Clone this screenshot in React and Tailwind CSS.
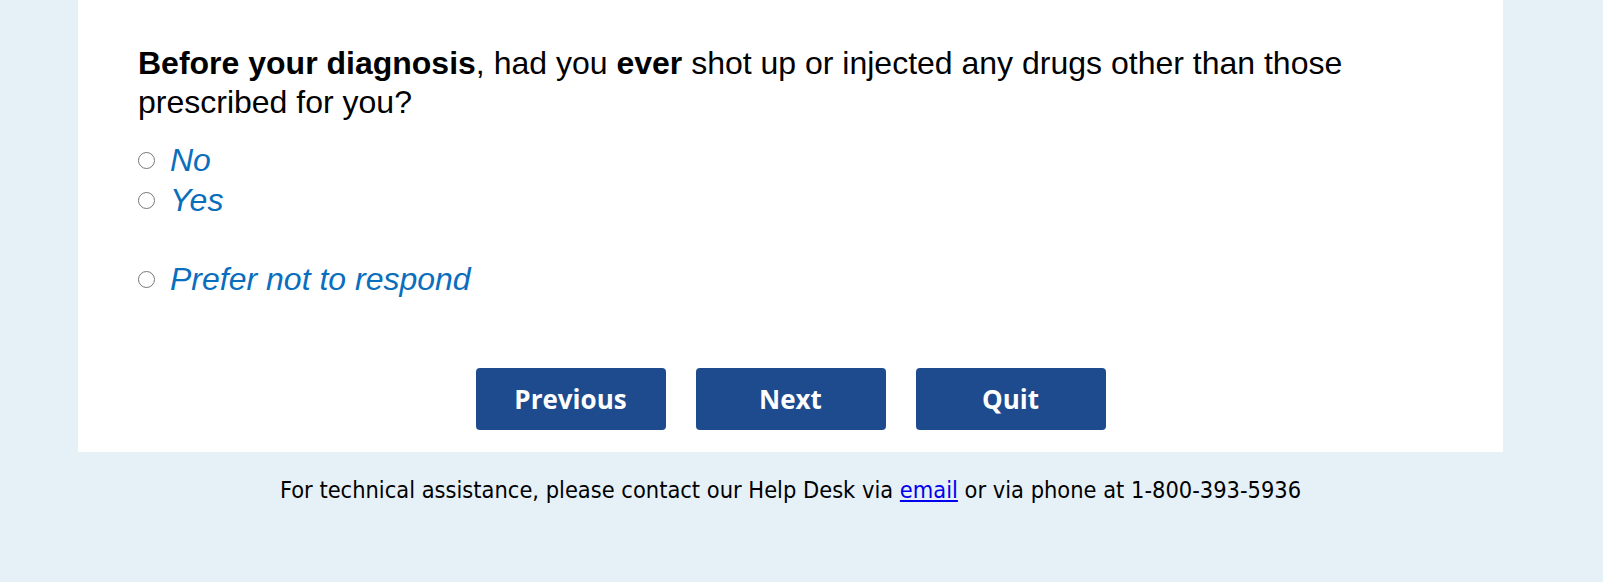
export default function App() {
    const options = [
        { id: 'no', label: 'No' },
        { id: 'yes', label: 'Yes' },
    ];

    const radioCls = 'm-0 h-[17px] w-[17px] shrink-0 appearance-none rounded-full border-[1.5px] border-[#767676] bg-white checked:border-[5px] checked:border-[#1e4a8e]';

    return (
        <div className="min-h-[582px] w-full bg-[#e6f1f7]">
            <div className="ml-[78px] w-[1425px]">
                {/* Panel pertanyaan */}
                <div className="bg-white px-[60px] pt-[44px] pb-[22px] font-['Liberation_Sans',Arial,sans-serif]">
                    <p className="text-[32px] leading-[39px] text-black">
                        <b>Before your diagnosis</b>, had you <b>ever</b> shot up or injected any drugs other than those prescribed for you?
                    </p>

                    <div className="mt-[18px] flex flex-col">
                        {options.map((opt) => (
                            <label key={opt.id} className="flex h-[40px] items-center">
                                <input type="radio" name="q1" className={radioCls} />
                                <span className="ml-[15px] text-[32px] italic text-[#0a6ebd]">{opt.label}</span>
                            </label>
                        ))}
                        <label className="mt-[39px] flex h-[40px] items-center">
                            <input type="radio" name="q1" className={radioCls} />
                            <span className="ml-[15px] text-[32px] italic text-[#0a6ebd]">Prefer not to respond</span>
                        </label>
                    </div>

                    <div className="mt-[69px] flex justify-center gap-[30px] font-['Open_Sans',sans-serif]">
                        {['Previous', 'Next', 'Quit'].map((b) => (
                            <button key={b} className="h-[62px] w-[190px] rounded-[4px] bg-[#1e4a8e] text-[26px] font-bold text-white">
                                {b}
                            </button>
                        ))}
                    </div>
                </div>

                {/* Footer bantuan */}
                <p className="pt-[21px] text-center font-['DejaVu_Sans_Condensed','DejaVu_Sans',sans-serif] text-[23.4px] leading-[34px] text-black">
                    For technical assistance, please contact our Help Desk via <a href="#" className="text-[#0000ee] underline">email</a> or via phone at 1-800-393-5936
                </p>
            </div>
        </div>
    );
}
